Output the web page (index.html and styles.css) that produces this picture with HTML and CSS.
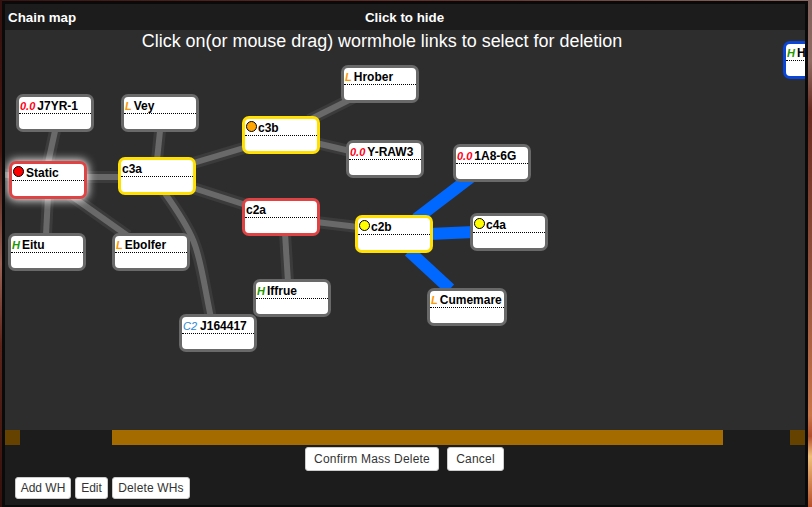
FILE: index.html
```html
<!DOCTYPE html>
<html lang="en">
<head>
<meta charset="utf-8">
<title>Chain map</title>
<link rel="stylesheet" href="styles.css">
</head>
<body>
<main class="panel">
  <header class="head"><span>Chain map</span><span class="hide">Click to hide</span><span></span></header>
  <section class="map">
    <svg class="links" width="800" height="400" viewBox="5 30 800 400">
      <defs>
        <g id="paths">
          <path d="M55 131L48 163"/><path d="M160 131L157 160"/><path d="M0 174L15 176"/><path d="M84 177H122"/>
          <path d="M48 196L46 235"/><path d="M70 195L128 236"/><path d="M190 164L247 147"/><path d="M190 187L246 205"/>
          <path d="M164 192C202 245 197 250 211 318"/><path d="M309 120L353 98"/><path d="M316 143L350 151"/>
          <path d="M316 222L358 227"/><path d="M285 233L288 282"/>
        </g>
      </defs>
      <use href="#paths" class="edge-halo"/>
      <use href="#paths" class="edge"/>
      <g class="edge-picked"><path d="M416 219L471 177"/><path d="M429 234L474 232"/><path d="M409 251L450 289"/></g>
    </svg>
    <p class="hint">Click on(or mouse drag) wormhole links to select for deletion</p>
    <div class="node n-j7yr"><div class="name"><i class="null">0.0</i>J7YR-1</div></div>
    <div class="node n-vey"><div class="name"><i class="low">L</i>Vey</div></div>
    <div class="node yellow n-c3b"><div class="name"><b class="dot orange"></b>c3b</div></div>
    <div class="node n-hrober"><div class="name"><i class="low">L</i>Hrober</div></div>
    <div class="node n-yraw"><div class="name"><i class="null">0.0</i>Y-RAW3</div></div>
    <div class="node red glow n-static"><div class="name"><b class="dot crimson"></b>Static</div></div>
    <div class="node yellow n-c3a"><div class="name">c3a</div></div>
    <div class="node n-eitu"><div class="name"><i class="high">H</i>Eitu</div></div>
    <div class="node n-ebolfer"><div class="name"><i class="low">L</i>Ebolfer</div></div>
    <div class="node red n-c2a"><div class="name">c2a</div></div>
    <div class="node n-iffrue"><div class="name"><i class="high">H</i>Iffrue</div></div>
    <div class="node n-j164"><div class="name"><i class="class2">C2</i>J164417</div></div>
    <div class="node n-1a8"><div class="name"><i class="null">0.0</i>1A8-6G</div></div>
    <div class="node yellow n-c2b"><div class="name"><b class="dot lemon"></b>c2b</div></div>
    <div class="node n-c4a"><div class="name"><b class="dot lemon"></b>c4a</div></div>
    <div class="node n-cumemare"><div class="name"><i class="low">L</i>Cumemare</div></div>
    <div class="node blue n-edge"><div class="name"><i class="high">H</i>H</div></div>
  </section>
  <div class="scroll"><span class="arrow"></span><span class="thumb"></span><span class="arrow"></span></div>
  <div class="confirm"><button class="wide">Confirm Mass Delete</button><button class="cancel">Cancel</button></div>
  <footer class="tools"><button class="add">Add WH</button><button class="edit">Edit</button><button class="delete">Delete WHs</button></footer>
</main>
</body>
</html>
```
FILE: styles.css
```css
* { box-sizing: border-box; }
body {
  margin: 0;
  height: 507px;
  padding: 1px 4px 0 2px;
  overflow: hidden;
  font-family: "Liberation Sans", Arial, sans-serif;
  background:
    linear-gradient(#80605c, #8f6b61 12%, #682b20 22%, #93533e 55%, #c97548 82%, #b24e2b 86%, #f0c078 90%, #b6502c) right / 4px 100% no-repeat,
    linear-gradient(#35110f, #481710 30%, #9b6255 52%, #5c2419 68%, #35100c) left / 2px 100% no-repeat,
    linear-gradient(90deg, #3b1512, #632c27 50%, #8a6862);
}
.panel {
  display: flex;
  flex-direction: column;
  height: 507px;
  padding: 3px 3px 0;
  background: linear-gradient(#1c1c1c, #1c1c1c) 3px 3px / 800px 501px no-repeat #0a0a0a;
}
.head {
  flex: none;
  display: grid;
  grid-template-columns: 1fr auto 1fr;
  height: 26px;
  padding: 1px 4px 0 3px;
  line-height: 26px;
  font-size: 13.33px;
  font-weight: bold;
  color: #fff;
}
.map {
  flex: none;
  position: relative;
  height: 400px;
  overflow: hidden;
  background: #2d2d2d;
}
.links { position: absolute; left: 0; top: 0; fill: none; }
.edge-halo { stroke: #3b3b3b; stroke-width: 12px; }
.edge { stroke: #696969; stroke-width: 6px; }
.edge-picked { stroke: #0068ff; stroke-width: 12px; }
.hint {
  position: relative;
  margin: 0;
  padding-right: 46px;
  line-height: 22px;
  font-size: 17.94px;
  text-align: center;
  color: #fff;
}
.node {
  position: absolute;
  width: 78px;
  height: 38px;
  border: 3px solid #696969;
  border-radius: 7px;
  background: #fff;
}
.name {
  display: flex;
  height: 17px;
  padding-left: 1px;
  border-bottom: 1px dotted #000;
  line-height: 18px;
  font-size: 12px;
  font-weight: bold;
  white-space: nowrap;
  color: #000;
}
.name i { margin-right: 2px; font-size: 11px; }
.null { color: #ff0018; }
.low { color: #ff9900; }
.high { color: #229900; }
.class2 { font-weight: normal; padding-right: 1px; color: #2a86d8; }
.dot {
  width: 11px;
  height: 11px;
  margin: 2px 1px 0 0;
  border: 1px solid #000;
  border-radius: 50%;
}
.orange { background: #ffa500; }
.crimson { margin-right: 2px; background: #f00; }
.lemon { background: #ff0; }
.yellow { border-color: #ffe000; }
.red { border-color: #e04343; }
.blue { border-color: #0845d8; }
.glow { box-shadow: 0 0 10px 1px #fff; }
.n-j7yr { left: 11px; top: 64px; }
.n-vey { left: 116px; top: 64px; }
.n-c3b { left: 237px; top: 86px; }
.n-hrober { left: 336px; top: 35px; }
.n-yraw { left: 341px; top: 110px; }
.n-static { left: 4px; top: 131px; }
.n-c3a { left: 113px; top: 127px; }
.n-eitu { left: 3px; top: 203px; }
.n-ebolfer { left: 107px; top: 203px; }
.n-c2a { left: 237px; top: 168px; }
.n-iffrue { left: 248px; top: 249px; }
.n-j164 { left: 174px; top: 284px; }
.n-1a8 { left: 448px; top: 114px; }
.n-c2b { left: 350px; top: 185px; }
.n-c4a { left: 465px; top: 183px; }
.n-cumemare { left: 422px; top: 258px; width: 80px; }
.n-edge { left: 778px; top: 11px; }
.scroll { flex: none; display: flex; height: 15px; }
.arrow { width: 15px; background: #664200; }
.thumb { width: 611px; margin: 0 67px 0 92px; background: #a46c00; }
button {
  height: 22px;
  padding: 0;
  border: 1px solid #ccc;
  border-radius: 3px;
  background: #fff;
  font: 12px/18px "Liberation Sans", Arial, sans-serif;
  white-space: nowrap;
  color: #333;
}
.confirm { display: flex; gap: 8px; padding: 2px 0 0 300px; }
.confirm button { height: 24px; letter-spacing: .2px; }
.wide { width: 134px; }
.cancel { width: 57px; }
.tools { display: flex; gap: 4px; padding: 6px 0 0 10px; }
.add { width: 56px; }
.edit { width: 33px; }
.delete { width: 78px; letter-spacing: .15px; }
```
